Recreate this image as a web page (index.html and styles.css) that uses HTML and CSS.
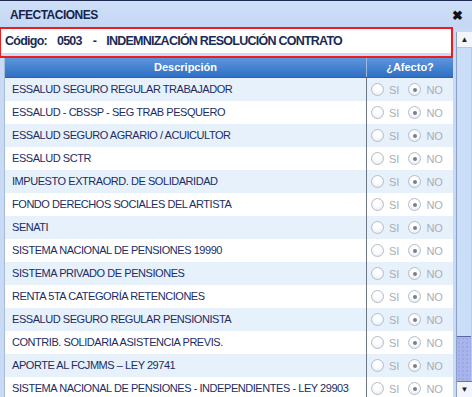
FILE: index.html
```html
<!DOCTYPE html>
<html>
<head>
<meta charset="utf-8">
<link rel="stylesheet" href="styles.css">
</head>
<body>
<div class="win">
  <div class="titlebar">
    <span class="title">AFECTACIONES</span>
    <span class="close">&#x2716;</span>
  </div>
  <div class="body">
    <div class="main">
      <div class="codebox">
        <div class="codeinner"><span>Código:</span><span class="num">0503</span><span class="dash">-</span><span class="name">INDEMNIZACIÓN RESOLUCIÓN CONTRATO</span></div>
      </div>
      <div class="table">
        <div class="thead">
          <div class="th c1">Descripción</div>
          <div class="th c2">¿Afecto?</div>
        </div>
        <div class="row odd"><div class="c1">ESSALUD SEGURO REGULAR TRABAJADOR</div><div class="c2"><span class="rad"></span><span class="lbl">SI</span><span class="rad on"></span><span class="lbl">NO</span></div></div>
        <div class="row"><div class="c1">ESSALUD - CBSSP - SEG TRAB PESQUERO</div><div class="c2"><span class="rad"></span><span class="lbl">SI</span><span class="rad on"></span><span class="lbl">NO</span></div></div>
        <div class="row odd"><div class="c1">ESSALUD SEGURO AGRARIO / ACUICULTOR</div><div class="c2"><span class="rad"></span><span class="lbl">SI</span><span class="rad on"></span><span class="lbl">NO</span></div></div>
        <div class="row"><div class="c1">ESSALUD SCTR</div><div class="c2"><span class="rad"></span><span class="lbl">SI</span><span class="rad on"></span><span class="lbl">NO</span></div></div>
        <div class="row odd"><div class="c1">IMPUESTO EXTRAORD. DE SOLIDARIDAD</div><div class="c2"><span class="rad"></span><span class="lbl">SI</span><span class="rad on"></span><span class="lbl">NO</span></div></div>
        <div class="row"><div class="c1">FONDO DERECHOS SOCIALES DEL ARTISTA</div><div class="c2"><span class="rad"></span><span class="lbl">SI</span><span class="rad on"></span><span class="lbl">NO</span></div></div>
        <div class="row odd"><div class="c1">SENATI</div><div class="c2"><span class="rad"></span><span class="lbl">SI</span><span class="rad on"></span><span class="lbl">NO</span></div></div>
        <div class="row"><div class="c1">SISTEMA NACIONAL DE PENSIONES 19990</div><div class="c2"><span class="rad"></span><span class="lbl">SI</span><span class="rad on"></span><span class="lbl">NO</span></div></div>
        <div class="row odd"><div class="c1">SISTEMA PRIVADO DE PENSIONES</div><div class="c2"><span class="rad"></span><span class="lbl">SI</span><span class="rad on"></span><span class="lbl">NO</span></div></div>
        <div class="row"><div class="c1">RENTA 5TA CATEGORÍA RETENCIONES</div><div class="c2"><span class="rad"></span><span class="lbl">SI</span><span class="rad on"></span><span class="lbl">NO</span></div></div>
        <div class="row odd"><div class="c1">ESSALUD SEGURO REGULAR PENSIONISTA</div><div class="c2"><span class="rad"></span><span class="lbl">SI</span><span class="rad on"></span><span class="lbl">NO</span></div></div>
        <div class="row"><div class="c1">CONTRIB. SOLIDARIA ASISTENCIA PREVIS.</div><div class="c2"><span class="rad"></span><span class="lbl">SI</span><span class="rad on"></span><span class="lbl">NO</span></div></div>
        <div class="row odd"><div class="c1">APORTE AL FCJMMS – LEY 29741</div><div class="c2"><span class="rad"></span><span class="lbl">SI</span><span class="rad on"></span><span class="lbl">NO</span></div></div>
        <div class="row"><div class="c1">SISTEMA NACIONAL DE PENSIONES - INDEPENDIENTES - LEY 29903</div><div class="c2"><span class="rad"></span><span class="lbl">SI</span><span class="rad on"></span><span class="lbl">NO</span></div></div>
      </div>
    </div>
    <div class="scrollbar">
      <div class="sbtn">&#x25B2;</div>
      <div class="track"><div class="thumb"></div></div>
      <div class="sbtn">&#x25BC;</div>
    </div>
  </div>
</div>
</body>
</html>
```
FILE: styles.css
```css
html, body {
  margin: 0;
  padding: 0;
  width: 472px;
  height: 397px;
  overflow: hidden;
  background: #c8daf6;
}
.win {
  width: 472px;
  height: 397px;
  border-top: 1px solid #1e2a50;
  box-sizing: border-box;
  font-family: "Liberation Sans", Arial, sans-serif;
  overflow: hidden;
}
.titlebar {
  height: 26px;
  display: flex;
  align-items: center;
  justify-content: space-between;
  padding: 0 9px 0 10px;
  background: linear-gradient(#cfdff8, #c4d7f4);
}
.title {
  font-weight: bold;
  font-size: 12px;
  letter-spacing: -0.5px;
  color: #16244a;
  padding-top: 2px;
}
.close {
  font-size: 13px;
  font-weight: bold;
  color: #111;
  margin-top: 3px;
}
.body {
  display: flex;
  align-items: flex-start;
}
.main {
  width: 454px;
  flex: none;
}
.codebox {
  border: 2px solid #ee1c1c;
  border-left-width: 1px;
  height: 27px;
  width: 450px;
  background: #c8daf6;
}
.codeinner {
  background: #fff;
  height: 24px;
  display: flex;
  align-items: center;
  padding-left: 4px;
  padding-bottom: 1px;
  box-sizing: border-box;
  font-family: "Liberation Sans", Arial, sans-serif;
  font-weight: bold;
  font-size: 12.5px;
  letter-spacing: -0.75px;
  color: #1a2b55;
  white-space: nowrap;
}
.num {
  margin-left: 10px;
}
.dash {
  margin-left: 11px;
}
.name {
  margin-left: 10px;
}
.table {
  margin-left: 4px;
  width: 448px;
  border-left: 1px solid #a6bbd6;
  background: #fff;
}
.thead {
  display: flex;
  height: 19px;
  background: linear-gradient(#5d96dc, #2f6fc4);
  border-bottom: 1px solid #2a62b0;
}
.th {
  color: #fff;
  font-weight: bold;
  font-size: 11px;
  line-height: 19px;
  text-align: center;
}
.c1 {
  width: 361px;
  flex: none;
}
.c2 {
  width: 87px;
  flex: none;
  border-left: 1px solid #6d7683;
  box-sizing: border-box;
}
.th.c2 {
  border-left: 1px solid #9fb9de;
}
.row {
  display: flex;
  height: 23px;
  align-items: stretch;
}
.row.odd {
  background: #e7f1fc;
}
.row .c1 {
  font-size: 11px;
  letter-spacing: -0.45px;
  color: #1b2d63;
  line-height: 23px;
  padding-left: 7px;
  box-sizing: border-box;
  white-space: nowrap;
}
.row .c2 {
  display: flex;
  align-items: center;
  padding-left: 4px;
}
.rad {
  width: 13px;
  height: 13px;
  border-radius: 50%;
  border: 1px solid #b4bdcc;
  box-sizing: border-box;
  background: radial-gradient(circle at 50% 35%, #ffffff 30%, #e2e8f2 100%);
  flex: none;
  position: relative;
}
.rad.on::after {
  content: "";
  position: absolute;
  left: 3.5px;
  top: 3.5px;
  width: 4px;
  height: 4px;
  border-radius: 50%;
  background: #7b7f86;
}
.lbl {
  font-size: 11px;
  color: #a9adb4;
  margin-left: 5px;
  margin-right: 9px;
}
.scrollbar {
  margin-top: 5px;
  margin-left: 2px;
  width: 16px;
  height: 365px;
  display: flex;
  flex-direction: column;
  border-left: 1px solid #8aa0c4;
  box-sizing: border-box;
  background: #c9ddf7;
}
.sbtn {
  height: 15px;
  flex: none;
  font-size: 8px;
  line-height: 15px;
  text-align: center;
  color: #222;
  background: #f2f6fc;
  border-bottom: 1px solid #b7c7de;
}
.sbtn:last-child {
  border-bottom: none;
  border-top: 1px solid #6a76a0;
}
.track {
  flex: 1;
  display: flex;
  flex-direction: column;
  justify-content: flex-end;
  border-right: 1px solid #b9cbe6;
}
.thumb {
  height: 44px;
  background-color: #a8b5ec;
  background-image: radial-gradient(#8e9cd8 0.6px, transparent 0.8px);
  background-size: 4px 4px;
  border-top: 1px solid #5a66a8;
}
```
